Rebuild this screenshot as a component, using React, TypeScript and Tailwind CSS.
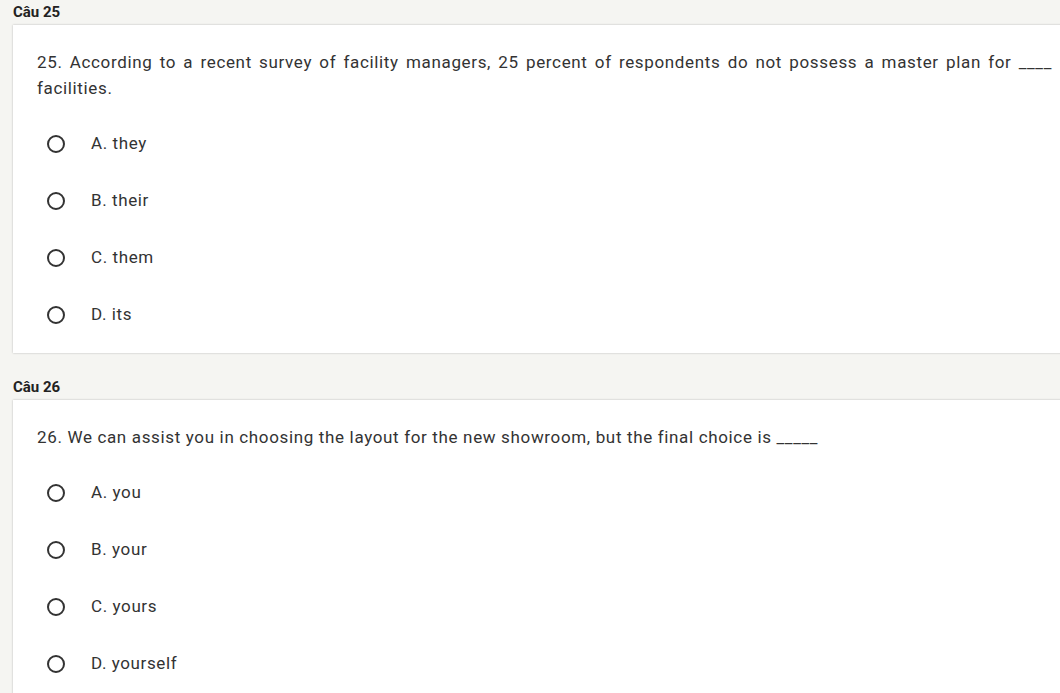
const questions = [
  {
    id: 25,
    text: "25. According to a recent survey of facility managers, 25 percent of respondents do not possess a master plan for ____ facilities.",
    options: ["A. they", "B. their", "C. them", "D. its"],
  },
  {
    id: 26,
    text: "26. We can assist you in choosing the layout for the new showroom, but the final choice is _____",
    options: ["A. you", "B. your", "C. yours", "D. yourself"],
  },
];

const Radio = () => (
  <span className="block w-[18px] h-[18px] rounded-full border-2 border-[#333] shrink-0" />
);

const Question = ({ id, text, options }: { id: number; text: string; options: string[] }) => {
  return (
    <div>
      <div className="h-[25px] pl-[13px] flex items-center text-[15px] font-bold text-[#222]">Câu {id}</div>
      <div className="ml-[13px] w-[1063px] bg-white shadow-[0_0_2px_rgba(0,0,0,0.25)] pt-[24px] pb-[10px] pl-[24px] pr-[24px]">
        <p className="text-[17px] leading-[26px] tracking-[0.65px] text-[#333] text-justify">{text}</p>
        <div className="mt-[14px] flex flex-col">
          {options.map((o) => (
            <label key={o} className="h-[57px] flex items-center">
              <span className="w-[54px] flex pl-[10px]">
                <Radio />
              </span>
              <span className="text-[17px] tracking-[0.6px] text-[#333]">{o}</span>
            </label>
          ))}
        </div>
      </div>
    </div>
  );
};

export default function App() {
  return (
    <div className="w-[1060px] h-[693px] overflow-hidden bg-[#f5f5f2]" style={{ fontFamily: "Roboto, 'Liberation Sans', sans-serif" }}>
      <div className="flex flex-col gap-[22px]">
        {questions.map((q) => (
          <Question key={q.id} {...q} />
        ))}
      </div>
    </div>
  );
}
